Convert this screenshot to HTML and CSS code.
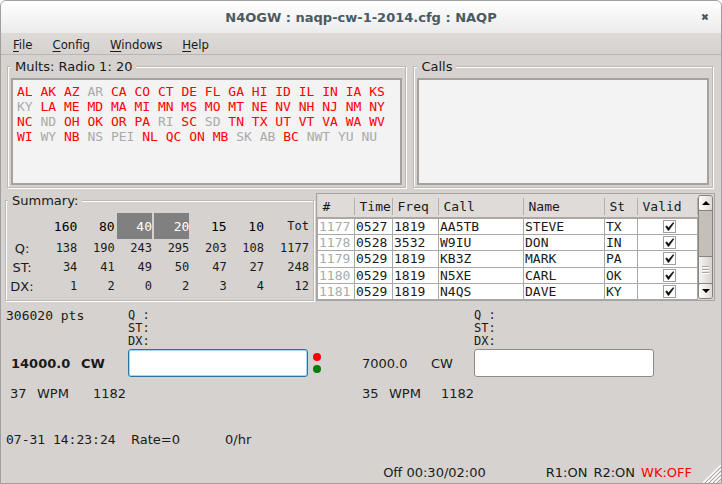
FILE: index.html
```html
<!DOCTYPE html>
<html lang="en">
<head>
    <meta charset="UTF-8">
    <meta name="viewport" content="width=device-width, initial-scale=1.0">
    <title>N4OGW : naqp-cw-1-2014.cfg : NAQP</title>
    <link rel="stylesheet" href="styles.css">
</head>
<body>
<div class="window">
    <header class="titlebar">
        <h1>N4OGW : naqp-cw-1-2014.cfg : NAQP</h1>
        <button class="close" type="button" aria-label="Close">
            <svg width="8" height="8" viewBox="0 0 8 8"><path d="M1.5 1.5L6.5 6.5M6.5 1.5L1.5 6.5" stroke="#4a5a62" stroke-width="2.4"/></svg>
        </button>
    </header>

    <nav class="menu">
        <a href="#"><u>F</u>ile</a>
        <a href="#"><u>C</u>onfig</a>
        <a href="#"><u>W</u>indows</a>
        <a href="#"><u>H</u>elp</a>
    </nav>

    <!-- Multipliers and calls -->
    <div class="top-row">
        <fieldset class="group">
            <legend>Mults: Radio 1: 20</legend>
            <div class="well mults">
                <div>AL AK AZ <i>AR</i> CA CO CT DE FL GA HI ID IL IN IA KS</div>
                <div><i>KY</i> LA ME MD MA MI MN MS MO MT NE NV NH NJ NM NY</div>
                <div>NC <i>ND</i> OH OK OR PA <i>RI</i> SC <i>SD</i> TN TX UT VT VA WA WV</div>
                <div>WI <i>WY</i> NB <i>NS</i> <i>PEI</i> NL QC ON MB <i>SK</i> <i>AB</i> BC <i>NWT YU NU</i></div>
            </div>
        </fieldset>
        <fieldset class="group">
            <legend>Calls</legend>
            <textarea class="well" aria-label="Calls" readonly></textarea>
        </fieldset>
    </div>

    <!-- Summary and log -->
    <div class="log-row">
        <fieldset class="group">
            <legend>Summary:</legend>
            <table class="summary">
                <thead>
                    <tr><td></td><th>160</th><th>80</th><th class="on">40</th><th class="on">20</th><th>15</th><th>10</th><th class="tot">Tot</th></tr>
                </thead>
                <tbody>
                    <tr><th>Q:</th><td>138</td><td>190</td><td>243</td><td>295</td><td>203</td><td>108</td><td>1177</td></tr>
                    <tr><th>ST:</th><td>34</td><td>41</td><td>49</td><td>50</td><td>47</td><td>27</td><td>248</td></tr>
                    <tr><th>DX:</th><td>1</td><td>2</td><td>0</td><td>2</td><td>3</td><td>4</td><td>12</td></tr>
                </tbody>
            </table>
        </fieldset>

        <div class="log">
            <table>
                <colgroup>
                    <col class="num"><col class="time"><col class="freq"><col class="call"><col class="name"><col class="st"><col class="valid">
                </colgroup>
                <thead>
                    <tr><th>#</th><th>Time</th><th>Freq</th><th>Call</th><th>Name</th><th>St</th><th>Valid</th></tr>
                </thead>
                <tbody>
                    <tr><td>1177</td><td>0527</td><td>1819</td><td>AA5TB</td><td>STEVE</td><td>TX</td><td><input type="checkbox" aria-label="Valid 1177" checked></td></tr>
                    <tr><td>1178</td><td>0528</td><td>3532</td><td>W9IU</td><td>DON</td><td>IN</td><td><input type="checkbox" aria-label="Valid 1178" checked></td></tr>
                    <tr><td>1179</td><td>0529</td><td>1819</td><td>KB3Z</td><td>MARK</td><td>PA</td><td><input type="checkbox" aria-label="Valid 1179" checked></td></tr>
                    <tr><td>1180</td><td>0529</td><td>1819</td><td>N5XE</td><td>CARL</td><td>OK</td><td><input type="checkbox" aria-label="Valid 1180" checked></td></tr>
                    <tr><td>1181</td><td>0529</td><td>1819</td><td>N4QS</td><td>DAVE</td><td>KY</td><td><input type="checkbox" aria-label="Valid 1181" checked></td></tr>
                </tbody>
            </table>
            <div class="scrollbar">
                <button type="button" aria-label="Scroll up"><svg width="8" height="4" viewBox="0 0 8 4"><path d="M4 0L8 4H0z"/></svg></button>
                <div class="track"></div>
                <div class="thumb"></div>
                <button type="button" aria-label="Scroll down"><svg width="8" height="4" viewBox="0 0 8 4"><path d="M4 4L0 0h8z"/></svg></button>
            </div>
        </div>
    </div>

    <!-- Radios -->
    <div class="radios">
        <section class="radio active">
            <div class="points mono">306020 pts</div>
            <pre class="info">Q :
ST:
DX:</pre>
            <label class="khz" for="call1">14000.0</label>
            <span class="mode">CW</span>
            <input class="entry" id="call1" type="text">
            <div class="leds"><span class="led red"></span><span class="led green"></span></div>
            <div class="speed"><span>37</span><span>WPM</span><span>1182</span></div>
        </section>
        <section class="radio">
            <div class="points"></div>
            <pre class="info">Q :
ST:
DX:</pre>
            <label class="khz" for="call2">7000.0</label>
            <span class="mode">CW</span>
            <input class="entry" id="call2" type="text">
            <div class="leds"></div>
            <div class="speed"><span>35</span><span>WPM</span><span>1182</span></div>
        </section>
    </div>

    <div class="clock">
        <span class="mono">07-31 14:23:24</span>
        <span class="rate">Rate=0</span>
        <span>0/hr</span>
    </div>

    <footer class="status">
        <span class="off">Off 00:30/02:00</span>
        <span>R1:ON</span>
        <span>R2:ON</span>
        <span class="wk">WK:OFF</span>
        <svg class="grip" width="18" height="18" viewBox="0 0 18 18">
            <path d="M0 18L18 0M4 18L18 4M8 18L18 8M12 18L18 12" stroke="#fff" stroke-width="1.4"/>
            <path d="M2 18L18 2M6 18L18 6M10 18L18 10M14 18L18 14" stroke="#aaa5a1"/>
        </svg>
    </footer>
</div>
</body>
</html>
```

FILE: styles.css
```css
* {
    box-sizing: border-box;
}

body {
    margin: 0;
    background-color: #fff;
    color: #1a1a1a;
    font: 13px/15px "DejaVu Sans", sans-serif;
}

.window {
    display: flex;
    flex-direction: column;
    min-height: 100vh;
    border: 1px solid #9f9f9f;
    border-radius: 6px 6px 0 0;
    background-color: #d6d2cf;
    overflow: hidden;
}

.mono, .mults, .log, .info, .summary td, .summary thead th {
    font-family: "DejaVu Sans Mono", monospace;
}

/* Title and menu */
.titlebar {
    display: grid;
    grid-template-columns: 1fr auto 1fr;
    align-items: center;
    height: 32px;
    background: linear-gradient(#fff, #ebebeb);
    color: #4a5a62;
}

h1 {
    grid-column: 2;
    margin: 0;
    font-size: 13px;
}

.close {
    display: flex;
    justify-self: end;
    margin-right: 12px;
    padding: 0;
    border: none;
    background: none;
}

.menu {
    display: flex;
    gap: 20px;
    height: 22px;
    padding: 4px 12px 0;
    border-bottom: 1px solid #bcb6b2;
    background: linear-gradient(#dedad7, #d6d2cf);
    font-family: "DejaVu Sans Condensed", "DejaVu Sans", sans-serif;
}

.menu a {
    color: inherit;
    text-decoration: none;
}

.menu u {
    text-underline-offset: 2px;
}

/* Group boxes */
.group {
    min-width: 0;
    margin: 0;
    padding: 4px 3px 2px;
    border: 1px solid #beb8b4;
    box-shadow: inset 1px 1px #fff, 1px 1px #fff;
}

legend {
    padding: 0 4px;
    background-color: #d6d2cf;
}

.top-row {
    display: grid;
    grid-template-columns: 4fr 3fr;
    gap: 7px;
    padding: 4px 8px 0 6px;
}

.well {
    display: block;
    width: 100%;
    height: 107px;
    padding: 4px;
    border: 2px solid #a5a19c;
    border-radius: 0;
    background-color: #f3f3f3;
    resize: none;
}

.mults {
    color: #f00;
    white-space: nowrap;
}

.mults i {
    color: #aaa;
    font-style: normal;
}

.log-row {
    display: grid;
    grid-template-columns: 309fr 399fr;
    gap: 2px;
    padding: 5px 6px 0 4px;
}

.log-row .group {
    padding: 5px 2px 0;
}

/* Band summary */
.summary {
    width: 100%;
    table-layout: fixed;
    border-spacing: 2px 0;
}

.summary th, .summary td {
    height: 19px;
    padding: 0;
    font-weight: normal;
    text-align: right;
}

.summary td {
    font-size: 12px;
}

.summary thead th {
    height: 26px;
    color: #000;
}

.summary tbody th {
    padding-right: 6px;
    text-align: center;
}

.summary thead td:first-child {
    width: 30px;
}

.summary thead .on {
    background-color: #808080;
    color: #fff;
}

.summary thead .tot {
    width: 43px;
    color: #1a1a1a;
    font-size: 12px;
}

/* Log */
.log {
    display: flex;
    height: 108px;
    padding-right: 1px;
    border: 1px solid #a9a49f;
}

.log table {
    flex: 1;
    table-layout: fixed;
    border-collapse: collapse;
}

.log th {
    height: 24px;
    padding: 2px 0 0 5px;
    border-bottom: 2px solid #aca7a2;
    background: linear-gradient(#b5b0ac, #b5b0ac) right 60% / 1px 17px no-repeat #dfdbd8;
    font-weight: normal;
    text-align: left;
}

.log td {
    height: 16px;
    padding: 1px 0 0 1px;
    border: 1px solid #a9a9a9;
    background-color: #fff;
    line-height: 14px;
}

.log td:first-child {
    color: #aaa;
}

.log td:last-child {
    padding: 0 0 0 3px;
}

.num { width: 37px; }
.time { width: 38px; }
.freq { width: 46px; }
.call { width: 85px; }
.st { width: 33px; }
.valid { width: 60px; }

.log input {
    display: block;
    width: 13px;
    height: 13px;
    margin: 0 auto;
    appearance: none;
    border: 1px solid #a39f9b;
    background-color: #fff;
}

.log input:checked {
    background-image: url("data:image/svg+xml,%3Csvg xmlns='http://www.w3.org/2000/svg' viewBox='0 0 11 11'%3E%3Cpath d='M1.500 5.500L3 4.700 4.500 6.800 9 1.500 10 2 4.800 9.500H4z' fill='%23111' stroke='%23111' stroke-width='.4'/%3E%3C/svg%3E");
}

.scrollbar {
    display: flex;
    flex-direction: column;
    width: 15px;
    margin: 1px 0;
    border: 1px solid #88837e;
    border-radius: 3px;
    background-color: #c4bfb9;
}

.scrollbar button {
    display: flex;
    align-items: center;
    justify-content: center;
    height: 14px;
    padding: 0;
    border: none;
    border-radius: 2px;
    background: linear-gradient(90deg, #fff, #dedad7);
}

.track {
    flex: 1;
    border: 1px solid #88837e;
    border-width: 1px 0;
}

.thumb {
    height: 27px;
    border-bottom: 1px solid #88837e;
    background:
        repeating-linear-gradient(#aaa5a1 0 1px, #fff 1px 2px, transparent 2px 3px) center / 7px 8px no-repeat,
        linear-gradient(90deg, #f5f4f3, #d6d2cf);
}

/* Radios */
.radios {
    display: grid;
    grid-template-columns: 356fr 359fr;
    padding: 7px 0 0 5px;
}

.radio {
    display: grid;
    grid-template-columns: 69px 43px 180px auto;
    grid-template-rows: 41px 28px 33px;
    align-items: center;
    justify-content: start;
}

.active {
    grid-template-columns: 75px 47px 180px auto;
}

.points {
    grid-column: 1 / 3;
    align-self: start;
}

.info {
    grid-column: 3 / 5;
    align-self: start;
    margin: 0;
    padding-top: 1px;
    font-size: 12px;
    line-height: 13px;
}

.active .khz {
    padding-left: 5px;
}

.active .khz, .active .mode {
    font-weight: bold;
}

.entry {
    width: 180px;
    height: 28px;
    padding: 0 4px;
    border: 1px solid #8f8b84;
    border-radius: 3px;
    outline: none;
    background-color: #fff;
    font: inherit;
}

.active .entry {
    border-color: #2a72a0;
    box-shadow: inset 0 0 0 1px #a5d7f3;
}

.leds {
    display: grid;
    gap: 4px;
    padding-left: 5px;
}

.led {
    width: 8px;
    height: 8px;
    border-radius: 50%;
}

.red { background-color: #f00; }
.green { background-color: #008000; }

.speed {
    display: grid;
    grid-template-columns: 27px 52px auto;
    grid-column: 1 / 5;
}

.active .speed {
    grid-template-columns: 27px 56px auto;
    padding-left: 4px;
}

/* Clock and status */
.clock {
    display: flex;
    padding: 22px 5px 0;
}

.clock .mono {
    width: 125px;
}

.rate {
    width: 94px;
}

.status {
    display: flex;
    align-items: flex-start;
    gap: 6px;
    margin-top: auto;
}

.off {
    flex: 1;
    padding-right: 54px;
    text-align: right;
}

.wk {
    color: #f00;
}

.grip {
    margin-left: 5px;
}
```
